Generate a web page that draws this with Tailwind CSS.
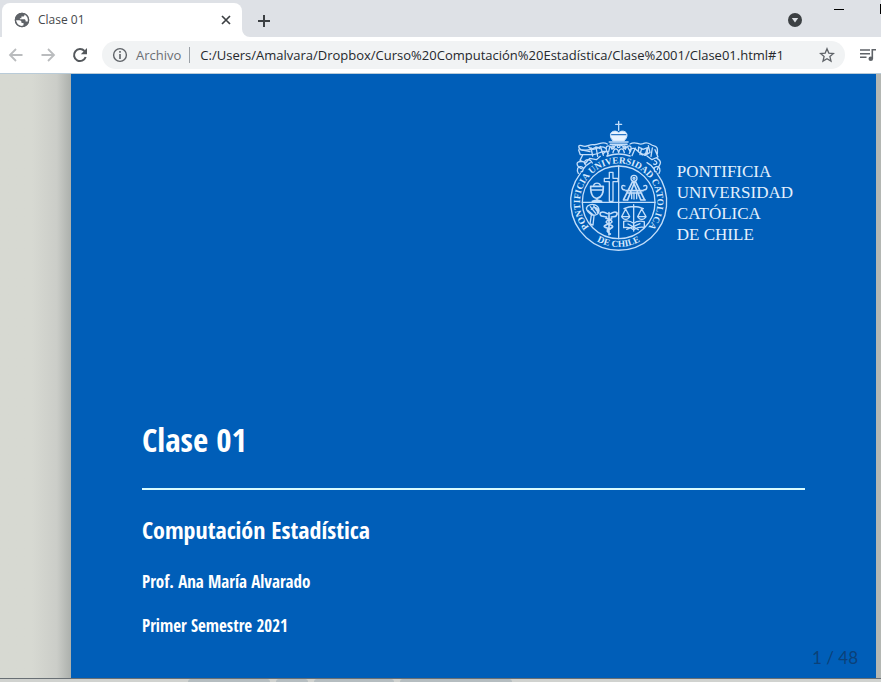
<!DOCTYPE html>
<html lang="es">
<head>
<meta charset="utf-8">
<meta name="viewport" content="width=device-width, initial-scale=1">
<title>Clase 01</title>
<script src="https://cdn.jsdelivr.net/npm/@tailwindcss/browser@4"></script>
</head>
<body class="flex min-h-screen flex-col overflow-x-hidden bg-[#d7d9d2] font-['Open_Sans',sans-serif]">

<!-- Tab strip -->
<header class="flex h-[37px] shrink-0 items-end bg-[#dee1e6]">
  <div class="relative ml-0.5 flex h-[34px] w-60 items-center rounded-t-lg bg-white pl-3 pr-2 text-[12px] text-[#45484c]">
    <svg class="mr-2 size-4" viewBox="0 0 16 16" aria-hidden="true">
      <circle cx="8" cy="8" r="7.2" fill="#5f6368"/>
      <path d="M1.8 8.2h3.3c1.5 0 2.4.8 2.4 2v.9h2v2.4C6 15 2.200 12.500 1.800 8.200ZM7.300 2.100h3.100v1.200c0 .8-.6 1.300-1.400 1.300H7.400v1.600H5.900v1h4.200c1 0 1.500.6 1.500 1.500v.8h1.500c.6 0 .9.300 1 .8 2-4-1-8.300-5-8.600Z" fill="#fff"/>
      <circle cx="8" cy="8" r="6.600" fill="none" stroke="#5f6368" stroke-width="1.400"/>
    </svg>
    <span class="grow">Clase 01</span>
    <button type="button" aria-label="Cerrar pestaña" class="flex size-4 items-center justify-center">
      <svg class="size-4" viewBox="0 0 16 16"><path d="m4 4 8 8M12 4l-8 8" stroke="#3c4043" stroke-width="1.700" fill="none"/></svg>
    </button>
    <svg class="absolute bottom-0 left-full size-2" viewBox="0 0 8 8" aria-hidden="true"><path d="M0 0a8 8 0 0 0 8 8H0Z" fill="#fff"/></svg>
  </div>
  <button type="button" aria-label="Nueva pestaña" class="mb-2 ml-3.5 size-4">
    <svg class="size-4" viewBox="0 0 16 16"><path d="M8 2v12M2 8h12" stroke="#3c4043" stroke-width="2"/></svg>
  </button>
  <div class="grow"></div>
  <button type="button" aria-label="Buscar pestañas" class="mb-2.5 mr-8 size-3.5">
    <svg class="size-3.5" viewBox="0 0 14 14"><circle cx="7" cy="7" r="7" fill="#3c4043"/><path d="M3.800 5h6.400L7 9.500Z" fill="#dee1e6"/></svg>
  </button>
  <button type="button" aria-label="Minimizar" class="mr-9 h-[29px] w-2.5 self-start">
    <svg class="h-[29px] w-2.5" viewBox="0 0 10 29"><path d="M0 9.500h10" stroke="#000"/></svg>
  </button>
  <button type="button" aria-label="Maximizar" class="h-3.5 w-px self-start pt-1"><span class="block h-2.5 w-px bg-black"></span></button>
</header>

<!-- Toolbar -->
<nav class="flex h-9 shrink-0 items-center bg-white pl-2 pr-1" aria-label="Navegación">
  <button type="button" aria-label="Atrás" class="size-4"><svg class="size-4" viewBox="0 0 16 16"><path d="M14.500 8H2M8 2 2 8l6 6" fill="none" stroke="#babcbe" stroke-width="1.800"/></svg></button>
  <button type="button" aria-label="Adelante" class="ml-4 size-4"><svg class="size-4" viewBox="0 0 16 16"><path d="M1.500 8H14M8 2l6 6-6 6" fill="none" stroke="#babcbe" stroke-width="1.800"/></svg></button>
  <button type="button" aria-label="Recargar" class="ml-4 size-4"><svg class="size-4" viewBox="0 0 16 16"><path d="M13.700 10A6 6 0 1 1 12.500 4" fill="none" stroke="#54585c" stroke-width="2"/><path d="M15 1v6.200H8.800Z" fill="#54585c"/></svg></button>
  <form class="ml-3.5 flex h-7 min-w-0 grow items-center rounded-full bg-[#f1f3f4] pl-2.5 pr-2.5 text-[13px]">
    <svg class="size-4 shrink-0" viewBox="0 0 16 16" aria-hidden="true"><circle cx="8" cy="8" r="6.400" fill="none" stroke="#5f6368" stroke-width="1.400"/><path d="M8 7v5M8 4v1.700" stroke="#5f6368" stroke-width="1.600"/></svg>
    <label for="url" class="ml-2 border-r border-[#9aa0a6] pr-2 leading-4 text-[#6b6f74]">Archivo</label>
    <input id="url" type="text" class="h-6 min-w-0 grow bg-transparent pl-2.5 text-[#25282c] outline-none" value="C:/Users/Amalvara/Dropbox/Curso%20Computación%20Estadística/Clase%2001/Clase01.html#1">
    <button type="button" aria-label="Añadir a marcadores" class="size-4 shrink-0"><svg class="size-4" viewBox="0 0 16 16"><path d="m8 1.800 1.800 4.300 4.700.4-3.600 3 1.100 4.600L8 11.700l-4 2.400 1.100-4.600-3.600-3 4.700-.4Z" fill="none" stroke="#5f6368" stroke-width="1.300"/></svg></button>
  </form>
  <button type="button" aria-label="Control de medios" class="ml-3.5 h-4 w-[18px] shrink-0"><svg class="h-4 w-[18px]" viewBox="0 0 18 16"><path d="M1 3h10M1 6.700h10M1 10.300h6.500" stroke="#5f6368" stroke-width="1.500"/><path d="M13.300 11.500V2.700H17" fill="none" stroke="#5f6368" stroke-width="1.600"/><circle cx="11.800" cy="11.800" r="2.300" fill="#5f6368"/></svg></button>
</nav>

<!-- Slide -->
<div class="flex grow border-t border-[#b9cbd8]">
  <div class="w-[71px] shrink-0 bg-linear-to-r from-[#d7d9d2] from-45% via-[#cbcdc8] via-80% to-[#acb0ac]"></div>
  <main class="relative flex grow flex-col bg-[#005eb8] px-[71px] pb-10 pt-9 text-white">
    <div class="flex items-center justify-end pr-3">
      <svg class="h-[150px] w-[120px] shrink-0" viewBox="0 0 360 450" role="img" aria-label="Escudo universitario">
        <g fill="none" stroke="#c3defa" stroke-width="4" stroke-linecap="round" stroke-linejoin="round">
          <!-- Rings and quarters -->
          <path d="M58 190A144 144 0 1 0 288 190"/>
          <circle cx="173" cy="277" r="109"/>
          <path d="M173 168v218M64 277h218"/>
          <!-- Tiara -->
          <path d="M173 34v27M164 43h18"/>
          <path d="M150 84c-9-18 12-27 23-16 11-11 32-2 23 16l-7 9h-32Z" fill="#e8f3ff" stroke-width="3"/>
          <path d="M152 74h42" stroke="#2a78c8"/>
          <path d="M145 96h56M148 103h50M139 138q34-12 68 0" stroke-width="5"/>
          <path d="M141 130c-16-25 7-29 12-12 8-18 32-18 40 0 5-17 28-13 12 12M156 128c3-15 14-15 17 0 3-15 14-15 17 0"/>
          <circle cx="156" cy="112" r="4"/><circle cx="173" cy="109" r="4"/><circle cx="190" cy="112" r="4"/>
          <!-- Scrollwork -->
          <path d="M139 102c-18-11-25 5-43 2-12-2-16 10-34 3-14-5-10 13 4 14l30-3c18-2 20-14 39-3M53 120l5 14 38 0c20-2 23-12 39-9M65 135l-8 16 17 8 12-14 20 4 12-10M67 155c-27-4-21 14-6 21M73 164c-10-12 12-24 21-5"/>
          <path d="M207 102c18-11 25 5 39-1 16-9 22 5 31 6 16 2 12 14 12 25M207 119c13-10 18 1 29 9l16 8 15-9-5-20M233 111l13 7 14-5-1 15-15 7-12-10ZM282 119l9 22-18 8-15-11M288 145c21 12 4 22 1 34M281 152c12 4 5 15-3 10"/>
          <path d="m90 113 5 25M105 111l5 28M118 109l9 27M223 114l-10 23M274 114l-4 25M146 112l-3 13M200 111l7 13"/>
          <path d="M83 111c13 17 19-10 34 5M65 120l22 5M127 131c12-17 17 1 11 7M242 115l-5 19M258 116l-5 19"/>
          <path d="M52 190c-6-10-2-22 8-20s8 14 0 16M294 190c6-10 2-22-8-20s-8 14 0 16M66 178q10-14 22-20M280 178q-10-14-22-20"/>
          <!-- Chalice and cross -->
          <path d="M89 229h38c1 27-10 35-19 36s-20-9-19-36ZM108 265v5l-14 4h28l-14-4M90 240h37" stroke-width="5"/>
          <path d="M98 226c2-9 18-9 20 0"/>
          <path d="M145 187h11v18h15v10h-15v59h-11v-59h-15v-10h15Z"/>
          <!-- Compass and columns -->
          <circle cx="219" cy="205" r="9"/><circle cx="219" cy="205" r="3"/>
          <path d="m215 214-27 54M223 214l27 54M221 216l-21 53M217 216l22 53M195 242h51M197 249h45" stroke-width="5"/>
          <path d="M192 228c-14-7-12 12 0 12M248 228c14-7 12 12 0 12M212 249v17M219 249v18M227 249v17M187 270h13M240 270h13"/>
          <!-- Lamp and caduceus -->
          <path d="M80 288c14-11 33-2 34 12s-15 20-26 12-15-17-8-24ZM88 290l16 20M98 288l11 16M80 301l17 14M91 315l-4 27 9 3 3-27M91 298c12-13 24 0 18 9"/>
          <path d="M144 308v66M139 311c-17-11-28-1-18 7l16 3M149 311c17-11 25-1 15 8l-13 2M135 325c24 8 22 12 5 18s-12 9 8 14c-14 5-11 7 0 15M152 326c-24 8-18 13-5 18s10 9-8 15" stroke-width="5"/>
          <!-- Scales, sword and book -->
          <path d="M218 284v79M212 290h12M189 296q29-13 58 0M194 297l-12 23h24ZM242 297l-12 23h25ZM183 322q11 13 22 0M231 322q11 13 23 0"/>
          <path d="M188 334c13-4 21-1 30 6 10-8 19-8 32-5v17c-15-2-23 0-32 7-8-7-17-8-30-6ZM201 342l31 17M237 341l-40 17"/>
        </g>
        <path id="upperArc" d="M101 367A116 116 0 1 1 245 367" fill="none"/>
        <path id="lowerArc" d="M56 342A134 134 0 0 0 290 342" fill="none"/>
        <g fill="#d9ebff" font-family="Liberation Serif, serif" font-weight="bold" text-anchor="middle">
          <text font-size="28"><textPath href="#upperArc" startOffset="50%">PONTIFICIA UNIVERSIDAD CATOLICA</textPath></text>
          <text font-size="28"><textPath href="#lowerArc" startOffset="50%">DE CHILE</textPath></text>
        </g>
      </svg>
      <p class="-ml-1 mt-9 font-['Liberation_Serif',serif] text-[17px] leading-[21px] text-[#e3f0fd]">PONTIFICIA<br>UNIVERSIDAD<br>CATÓLICA<br>DE CHILE</p>
    </div>

    <div class="mt-auto font-['Liberation_Sans_Narrow','Open_Sans_Condensed',sans-serif] font-bold">
      <h1 class="text-[33px] leading-10">Clase 01</h1>
      <hr class="mt-7 border-t-2 border-[#d9fbff]">
      <h2 class="mt-6 text-[24px] leading-8">Computación Estadística</h2>
      <h3 class="mt-6 text-[17px] leading-6">Prof. Ana María Alvarado</h3>
      <h3 class="mt-5 text-[17px] leading-6">Primer Semestre 2021</h3>
    </div>
    <div class="absolute bottom-2 right-[18px] font-['Lato',sans-serif] text-[17px] leading-6 text-[#0b4179]">1 / 48</div>
  </main>
  <div class="w-[5px] shrink-0 bg-[#b4b7b3]"></div>
</div>

<!-- Window edge -->
<footer class="flex h-1 shrink-0 gap-1.5 border-t border-[#686f74] bg-[#d0d2cf] pl-[188px]">
  <span class="w-[82px] rounded-t-sm bg-[#b5bdc0]"></span>
  <span class="w-8 rounded-t-sm bg-[#b5bdc0]"></span>
  <span class="w-20 rounded-t-sm bg-[#b5bdc0]"></span>
  <span class="w-28 rounded-t-sm bg-[#b5bdc0]"></span>
</footer>
</body>
</html>
